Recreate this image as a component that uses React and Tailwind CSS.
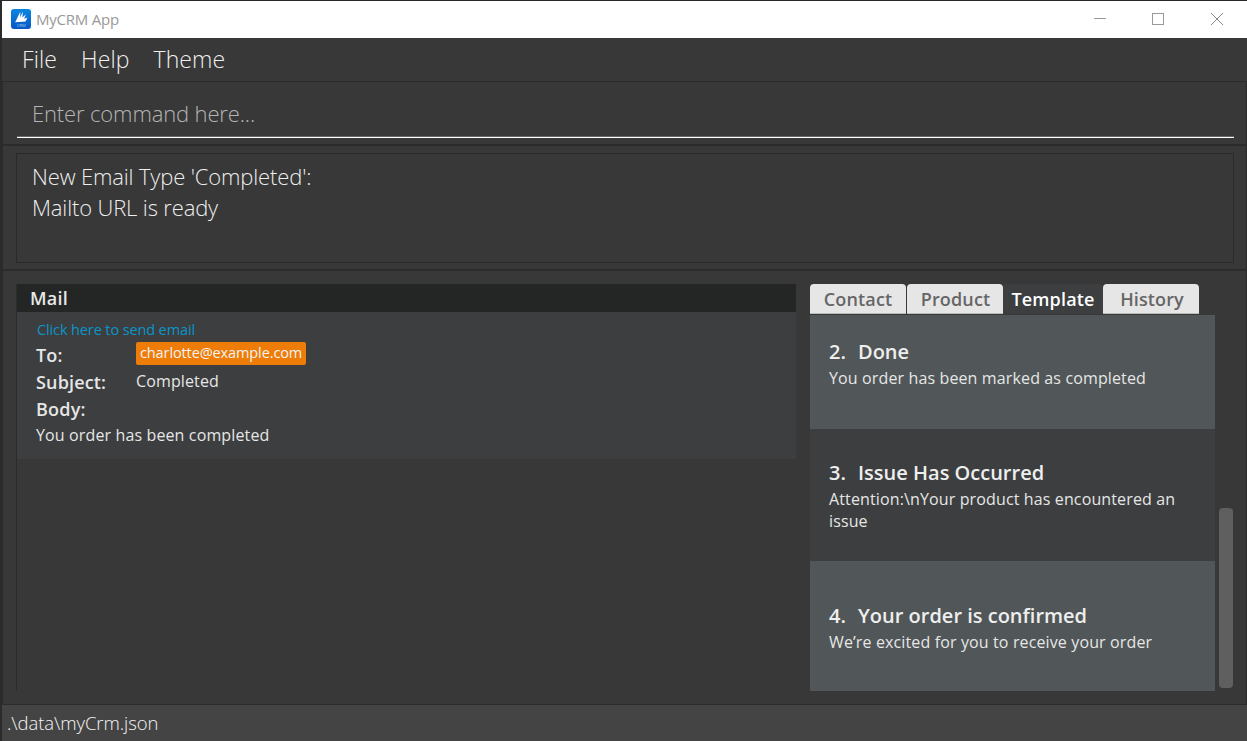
import React from "react";

function AppIcon() {
  return (
    <svg width="20" height="20" viewBox="0 0 20 20" className="shrink-0">
      <defs>
        <linearGradient id="appIconFill" x1="0" y1="0" x2="0" y2="1">
          <stop offset="0" stopColor="#0a86e0" />
          <stop offset="1" stopColor="#0757c4" />
        </linearGradient>
      </defs>
      <rect width="20" height="20" rx="3" fill="url(#appIconFill)" />
      <path d="M4.2 13.2 9.4 2.6 9 8.6 11.8 2.6 11.4 8.6 14.8 5.2 13.2 9.8 16.4 8.6 14.6 12.4Z" fill="#fff" />
      <text x="10.2" y="17.8" fontSize="4.2" textAnchor="middle" fill="#a5d0f5" fontFamily="Open Sans, sans-serif">CRM</text>
    </svg>
  );
}

function TitleBar() {
  return (
    <header className="flex h-[37px] shrink-0 items-center bg-white pl-[9px]">
      <div className="-mt-px"><AppIcon /></div>
      <span className="-mt-[2px] ml-[5px] text-[15px] leading-5 tracking-[-0.22px] text-[#999999]">MyCRM App</span>
      <div className="-mt-[2px] ml-auto flex items-center gap-[46px] pr-6">
        <svg width="12" height="12" viewBox="0 0 12 12" stroke="#999" fill="none"><path d="M0 5.5H12" /></svg>
        <svg width="12" height="12" viewBox="0 0 12 12" stroke="#999" fill="none"><rect x=".5" y=".5" width="11" height="11" /></svg>
        <svg width="12" height="12" viewBox="0 0 12 12" stroke="#888" fill="none" className="ml-px"><path d="M0 0 12 12M12 0 0 12" /></svg>
      </div>
    </header>
  );
}

const templates = [
  { id: 2, name: "Done", body: "You order has been marked as completed", box: "h-[114px] bg-[#515658] pt-[24px]" },
  { id: 3, name: "Issue Has Occurred", body: "Attention:\\nYour product has encountered an issue", box: "h-[132px] bg-[#3c3e3f] pt-[31px]" },
  { id: 4, name: "Your order is confirmed", body: "We’re excited for you to receive your order", box: "h-[130px] bg-[#515658] pt-[42px]" },
];

function MailPanel() {
  return (
    <section className="flex w-[780px] flex-col border-l border-[#2b2b2b]">
      <h2 className="h-7 bg-[#242625] pl-[13px] text-[18px] font-semibold leading-7 tracking-[0.2px] text-[#e8e8e8]">Mail</h2>
      <div className="h-[147px] bg-[#3c3e3f] pl-[19px] pt-[6px] text-[#e6e6e6]">
        <div className="h-[23px] pl-px text-[14.5px] leading-[24px] tracking-[-0.12px] text-[#0b95c9]">Click here to send email</div>
        <div className="flex h-[27px] items-start">
          <span className="w-[100px] text-[18px] font-semibold leading-[28px] tracking-[0.2px]">To:</span>
          <span className="mt-[1px] h-[23px] w-[170px] whitespace-nowrap rounded-[2px] bg-[#ee7c08] px-1 text-[14.5px] leading-[21px] tracking-[-0.11px] text-[#f3f3f3]">charlotte@example.com</span>
        </div>
        <div className="flex h-[27px]">
          <span className="w-[100px] text-[18px] font-semibold leading-[28px] tracking-[0.15px]">Subject:</span>
          <span className="text-[16px] leading-[26px] tracking-[0.13px]">Completed</span>
        </div>
        <div className="h-[27px] text-[18px] font-semibold leading-[28px] tracking-[0.2px]">Body:</div>
        <div className="text-[16px] leading-[26px] tracking-[0.13px]">You order has been completed</div>
      </div>
    </section>
  );
}

function Tabs() {
  const idle = "w-24 rounded-t-[4px] bg-[#e6e6e6] text-[#666666] border-b border-[#bcbcbc] pt-px";
  const tab = "flex h-[30px] items-center justify-center text-[18px] font-semibold";
  return (
    <nav className="flex h-[31px]">
      <div className={`${tab} ${idle} mr-px tracking-[0.15px]`}>Contact</div>
      <div className={`${tab} ${idle} pl-px tracking-[0.15px]`}>Product</div>
      <div className={`${tab} w-[100px] rounded-t-[4px] bg-[#3c3e3f] tracking-[0.15px] text-white`}>Template</div>
      <div className={`${tab} ${idle} pl-[2px] tracking-[0.1px]`}>History</div>
    </nav>
  );
}

export default function App() {
  return (
    <div className="flex h-[741px] w-[1247px] flex-col overflow-hidden border-l-2 border-t border-l-[#2b2b2b] border-t-[#2b2829] bg-[#383838] font-['Open_Sans',sans-serif]">
      <TitleBar />
      <nav className="flex h-[43px] shrink-0 gap-[24px] pl-5 text-[23px] font-light leading-[43px] tracking-[0.1px] text-[#f0f0f0]">
        <span>File</span><span>Help</span><span>Theme</span>
      </nav>
      <div className="h-[65px] shrink-0 border border-b-2 border-[#2b2b2b] pl-[14px] pr-[12px] pt-[8px]">
        <div className="h-[48px] border-b border-white pl-[15px] text-[22px] font-light leading-[46px] tracking-[-0.14px] text-[#b4b4b4] shadow-[inset_0_-1px_0_#6b6769]">Enter command here...</div>
      </div>
      <div className="h-[125px] shrink-0 border border-b-2 border-t-0 border-[#2b2b2b] pl-[13px] pr-[12px] pt-[7px]">
        <div className="h-[110px] border border-[#2b2b2b] pl-[15px] pt-[7px] text-[22px] font-light leading-[31px] tracking-[-0.15px] text-[#eeeeee]">
          <div>New Email Type 'Completed':</div>
          <div>Mailto URL is ready</div>
        </div>
      </div>
      <main className="flex h-[434px] shrink-0 border border-t-0 border-[#2b2b2b] pb-[13px] pl-[13px] pt-[13px]">
        <MailPanel />
        <section className="ml-[14px] flex w-[405px] flex-col">
          <Tabs />
          {templates.map((t) => (
            <article key={t.id} className={`${t.box} pl-[19px] text-[#e6e6e6]`}>
              <h3 className="flex h-[28px] text-[20px] font-semibold leading-[26px] text-[#eeeeee]">
                <span className="w-[29px]">{t.id}.</span>{t.name}
              </h3>
              <p className="w-[360px] text-[16px] leading-[22px] tracking-[0.13px]">{t.body}</p>
            </article>
          ))}
        </section>
        <div className="mb-[3px] ml-1 mt-auto h-[180px] w-[14px] rounded-[4px] bg-[#5f5f5f]" />
      </main>
      <footer className="grow bg-[#444444] pl-[5px] text-[18.5px] font-light leading-[36px] tracking-[-0.08px] text-[#f4f4f4]">.\data\myCrm.json</footer>
    </div>
  );
}
